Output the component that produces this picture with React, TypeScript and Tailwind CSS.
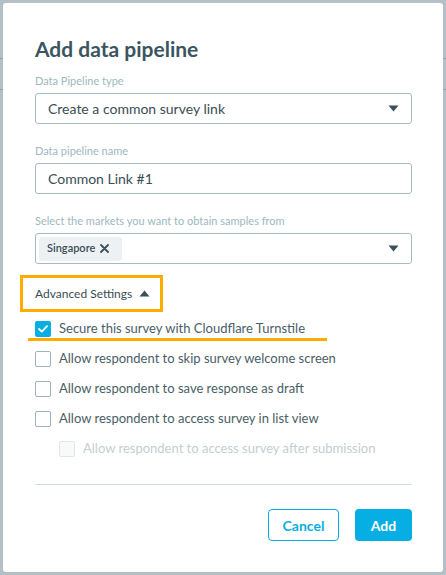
import React from "react";

const Caret = ({ up = false }: { up?: boolean }) => (
  <svg width="11" height="7" viewBox="0 0 11 7" className="block">
    {up ? (
      <path d="M0.5 6.5 L5.5 0.5 L10.5 6.5 Z" fill="#3b5159" />
    ) : (
      <path d="M0.5 0.5 L10.5 0.5 L5.5 6.5 Z" fill="#3b5159" />
    )}
  </svg>
);

const Check = ({ checked = false, disabled = false }: { checked?: boolean; disabled?: boolean }) => {
  if (checked)
    return (
      <div className="w-[16px] h-[16px] rounded-[2px] bg-[#07aee3] flex items-center justify-center shrink-0">
        <svg width="10" height="8" viewBox="0 0 10 8">
          <path d="M1 4 L3.8 6.6 L9 1.2" stroke="white" strokeWidth="1.8" fill="none" strokeLinecap="round" strokeLinejoin="round" />
        </svg>
      </div>
    );
  return (
    <div
      className={
        disabled
          ? "w-[16px] h-[16px] rounded-[2px] border border-[#dfe6e8] bg-[#f8fafa] shrink-0"
          : "w-[16px] h-[16px] rounded-[2px] border border-[#9fb3ba] bg-white shrink-0"
      }
    />
  );
};

export default function App() {
  return (
    <div
      className="relative w-[446px] h-[575px] bg-[#b3c1c7] p-[3px] overflow-hidden"
      style={{ fontFamily: "Lato, 'Open Sans', sans-serif" }}
    >
      <div className="absolute left-0 right-0 top-[58px] h-px bg-[#8fa3ab]" />
      <div className="absolute left-0 right-0 top-[89px] h-px bg-[#8fa3ab]" />
      <div className="relative w-[440px] h-[569px] bg-white rounded-[3px] pl-[32px] pr-[31px] pt-[33px] flex flex-col">
        <h1 className="text-[21px] leading-[26px] font-bold text-[#3b5560]">Add data pipeline</h1>

        <div className="mt-[12px] text-[11px] leading-[14px] text-[#9db8c0]">Data Pipeline type</div>
        <div className="mt-[5px] h-[31px] border border-[#a6bcc3] rounded-[3px] flex items-center justify-between pl-[12px] pr-[12px]">
          <span className="text-[14px] text-[#3a4d55]">Create a common survey link</span>
          <Caret />
        </div>

        <div className="mt-[20px] text-[11px] leading-[14px] text-[#9db8c0]">Data pipeline name</div>
        <div className="mt-[5px] h-[31px] border border-[#a6bcc3] rounded-[3px] flex items-center pl-[12px]">
          <span className="text-[14px] text-[#3a4d55]">Common Link #1</span>
        </div>

        <div className="mt-[20px] text-[11px] leading-[14px] text-[#9db8c0]">Select the markets you want to obtain samples from</div>
        <div className="mt-[5px] h-[31px] border border-[#a6bcc3] rounded-[3px] flex items-center justify-between pl-[3px] pr-[12px]">
          <div className="h-[24px] w-[83px] bg-[#edf1f3] rounded-[3px] flex items-center pl-[8px] gap-[5px]">
            <span className="text-[11px] font-semibold text-[#3a4d55]">Singapore</span>
            <svg width="9" height="9" viewBox="0 0 9 9">
              <path d="M1 1 L8 8 M8 1 L1 8" stroke="#3b5159" strokeWidth="1.8" strokeLinecap="round" />
            </svg>
          </div>
          <Caret />
        </div>

        <div className="mt-[11px] ml-[-15px] w-[143px] h-[37px] border-[3px] border-[#ffab00] flex items-center justify-between pl-[12px] pr-[10px]">
          <span className="text-[12px] text-[#3a4d55]">Advanced Settings</span>
          <Caret up />
        </div>

        <div className="mt-[2px] flex flex-col">
          <div className="relative h-[30px] flex items-center gap-[8px]">
            <Check checked />
            <span className="text-[13px] text-[#4a5e66]">Secure this survey with Cloudflare Turnstile</span>
            <div className="absolute left-[-7px] top-[24px] w-[299px] h-[3px] bg-[#ffab00]" />
          </div>
          <div className="h-[30px] flex items-center gap-[8px]">
            <Check />
            <span className="text-[13px] text-[#4a5e66]">Allow respondent to skip survey welcome screen</span>
          </div>
          <div className="h-[30px] flex items-center gap-[8px]">
            <Check />
            <span className="text-[13px] text-[#4a5e66]">Allow respondent to save response as draft</span>
          </div>
          <div className="h-[30px] flex items-center gap-[8px]">
            <Check />
            <span className="text-[13px] text-[#4a5e66]">Allow respondent to access survey in list view</span>
          </div>
          <div className="h-[30px] flex items-center gap-[8px] pl-[24px]">
            <Check disabled />
            <span className="text-[13px] text-[#c4ced2]">Allow respondent to access survey after submission</span>
          </div>
        </div>

        <div className="mt-[20px] h-px bg-[#cddde1]" />

        <div className="mt-[24px] flex justify-end gap-[16px]">
          <button className="h-[32px] w-[71px] rounded-[4px] border border-[#07aee3] text-[14px] font-bold text-[#07aee3] bg-white">
            Cancel
          </button>
          <button className="h-[32px] w-[57px] rounded-[4px] bg-[#07aee3] text-[14px] font-bold text-white">
            Add
          </button>
        </div>
      </div>
    </div>
  );
}
